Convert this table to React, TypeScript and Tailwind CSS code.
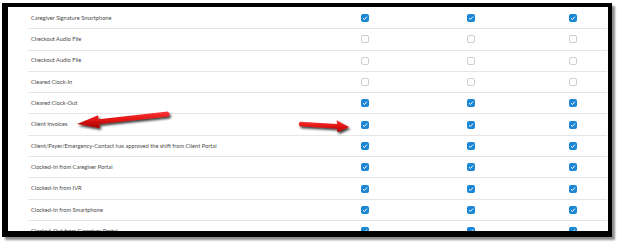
import React from "react";

const rows: { label: string; checked: boolean }[] = [
  { label: "Caregiver Signature Smartphone", checked: true },
  { label: "Checkout Audio File", checked: false },
  { label: "Checkout Audio File", checked: false },
  { label: "Cleared Clock-In", checked: false },
  { label: "Cleared Clock-Out", checked: true },
  { label: "Client Invoices", checked: true },
  { label: "Client/Payer/Emergency-Contact has approved the shift from Client Portal", checked: true },
  { label: "Clocked-In from Caregiver Portal", checked: true },
  { label: "Clocked-In from IVR", checked: true },
  { label: "Clocked-In from Smartphone", checked: true },
  { label: "Clocked-Out from Caregiver Portal", checked: true },
];

function Box({ checked }: { checked: boolean }) {
  if (checked) {
    return (
      <div className="w-[8px] h-[8px] rounded-[2px] bg-[#1b86d4] flex items-center justify-center">
        <svg width="6" height="6" viewBox="0 0 6 6">
          <path d="M1 3.2 L2.4 4.5 L5 1.6" stroke="#fff" strokeWidth="1" fill="none" />
        </svg>
      </div>
    );
  }
  return <div className="w-[8px] h-[8px] rounded-[2px] border border-[#cfcfcf] bg-white" />;
}

export default function App() {
  return (
    <div className="relative w-[622px] h-[247px] bg-white overflow-hidden" style={{ fontFamily: "Lato, 'Liberation Sans', sans-serif" }}>
      <div className="pl-[2px] pt-[3px]">
        <div className="w-[610px] h-[234px] border-black border-l-[6px] border-t-[4px] border-r-[4px] border-b-[6px] bg-white shadow-[3px_3px_2px_rgba(0,0,0,0.45)] overflow-hidden">
          <div className="ml-[20px] mr-[1px] pt-[1px]">
            {rows.map((r, i) => (
              <div key={i} className="h-[21.3px] flex items-center border-b border-[#e6e6e6]">
                <div className="w-[333px] pl-[3px] text-[5.7px] text-[#4a4a4a] whitespace-nowrap">{r.label}</div>
                <div className="w-[8px] flex justify-center"><Box checked={r.checked} /></div>
                <div className="w-[98px]" />
                <div className="w-[8px] flex justify-center"><Box checked={r.checked} /></div>
                <div className="w-[94px]" />
                <div className="w-[8px] flex justify-center"><Box checked={r.checked} /></div>
              </div>
            ))}
          </div>
        </div>
      </div>
      <svg className="absolute top-0 left-0 pointer-events-none" width="622" height="247">
        <defs>
          <linearGradient id="rg" x1="0" y1="0" x2="0" y2="1">
            <stop offset="0" stopColor="#ff3a3a" />
            <stop offset="0.5" stopColor="#e01414" />
            <stop offset="1" stopColor="#a80000" />
          </linearGradient>
          <filter id="sh" x="-20%" y="-50%" width="140%" height="200%">
            <feDropShadow dx="1.5" dy="2" stdDeviation="1.2" floodColor="#000" floodOpacity="0.75" />
          </filter>
        </defs>
        <path
          d="M77 124 L98.1 115.3 L98.6 119.3 L167.7 111.5 Q171 114 168.3 116.5 L99.2 123.9 L99.7 127.9 Z"
          fill="url(#rg)"
          filter="url(#sh)"
        />
        <path
          d="M349 127 L336.6 120.3 L337.1 124 L300.1 121.7 Q297.5 124 299.9 126.3 L336.9 128.6 L337.4 132.3 Z"
          fill="url(#rg)"
          filter="url(#sh)"
        />
      </svg>
    </div>
  );
}
